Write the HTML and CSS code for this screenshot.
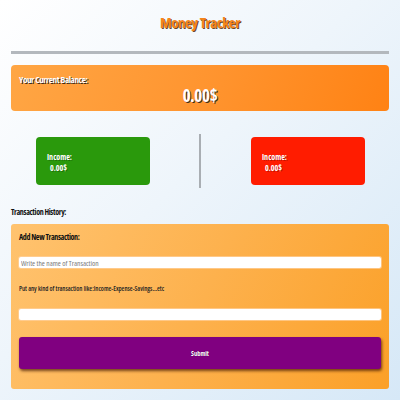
FILE: index.html
```html
<!DOCTYPE html>
<html><head><meta charset="utf-8"><link rel="stylesheet" href="styles.css"></head>
<body>
<div class="page">
  <h1 class="title">Money Tracker</h1>
  <div class="rule"></div>
  <div class="balance">
    <div class="balance-label">Your Current Balance:</div>
    <div class="balance-value">0.00$</div>
  </div>
  <div class="summary">
    <div class="side">
      <div class="card card-green">
        <div class="card-label">Income:</div>
        <div class="card-value">0.00$</div>
      </div>
    </div>
    <div class="divider"></div>
    <div class="side">
      <div class="card card-red">
        <div class="card-label">Income:</div>
        <div class="card-value">0.00$</div>
      </div>
    </div>
  </div>
  <div class="history">Transaction History:</div>
  <div class="form">
    <div class="form-title">Add New Transaction:</div>
    <input class="field field-name" type="text" placeholder="Write the name of Transaction">
    <div class="hint">Put any kind of transaction like:Income-Expense-Savings...etc</div>
    <input class="field field-kind" type="text">
    <button class="submit">Submit</button>
  </div>
</div>
</body></html>
```
FILE: styles.css
```css
html,body{height:100%}
body{
  margin:0;
  background:linear-gradient(135deg,#ffffff 0%,#eef5fb 45%,#d6e8f7 100%);
  font-family:"Open Sans","Noto Sans",sans-serif;
  font-stretch:75%;
}
.page{padding:0 11px;display:flex;flex-direction:column}
.title{
  margin:13px 0 0;
  text-align:center;
  font-size:15px;
  line-height:18px;
  font-weight:700;
  color:#f5851a;
  text-shadow:1px 1px 0 #6b4a2a;
  letter-spacing:-0.5px;
}
.rule{margin-top:20px;height:3px;background:#b3b8bd}
.balance{
  margin-top:11px;
  height:46px;
  box-sizing:border-box;
  border-radius:4px;
  background:linear-gradient(110deg,#ffa644 0%,#ff9530 50%,#ff8214 100%);
  padding:9px 8px 0;
  color:#fff;
  text-shadow:1px 1px 0 #3b2a1a;
}
.balance-label{font-size:9px;line-height:12px;font-weight:700;letter-spacing:-0.35px}
.balance-value{text-align:center;font-size:17px;line-height:20px;font-weight:700;margin-top:0;letter-spacing:-0.3px}
.summary{display:flex;align-items:center;margin-top:23px;height:54px}
.side{flex:1;display:flex;justify-content:center}
.divider{width:2px;height:54px;background:#a9aeb3}
.card{
  width:114px;height:48px;box-sizing:border-box;border-radius:4px;
  padding:14px 11px 0;color:#fff;
  text-shadow:1px 1px 0 rgba(0,0,0,0.25);
}
.card-green{background:#2a990c;margin-right:24px}
.card-red{background:#ff1c00;margin-left:26px}
.card-label{font-size:8px;line-height:11px;font-weight:700}
.card-value{font-size:8px;line-height:11px;font-weight:700;padding-left:3px}
.history{margin-top:19px;font-size:8px;line-height:10px;font-weight:700;color:#111;letter-spacing:-0.35px}
.form{
  margin-top:7px;
  border-radius:3px;
  background:linear-gradient(115deg,#ffc36f 0%,#fdb14d 50%,#fba028 100%);
  padding:8px 8px 20px;
  display:flex;flex-direction:column;
}
.form-title{font-size:8px;line-height:10px;font-weight:700;color:#111;letter-spacing:-0.35px}
.field{
  box-sizing:border-box;height:11px;width:100%;
  border:none;border-radius:2px;background:#fff;
  font-family:"Open Sans",sans-serif;font-stretch:75%;
  font-size:7.5px;padding:0 2px;margin:0;
  box-shadow:0 0 0 1px rgba(255,210,160,0.7);
}
.field::placeholder{color:#7a7a7a}
.field-name{margin-top:15px}
.hint{margin-top:17px;font-size:6.5px;line-height:8px;color:#222;font-weight:600}
.field-kind{margin-top:16px}
.submit{
  margin-top:17px;height:32px;width:100%;
  border:none;border-radius:3px;background:#800080;color:#fff;
  font-family:"Open Sans",sans-serif;font-stretch:75%;
  font-size:6.5px;font-weight:700;
  box-shadow:1px 2px 3px rgba(60,20,0,0.7);
  text-shadow:0 0 1px rgba(0,0,0,0.5);
}
```
